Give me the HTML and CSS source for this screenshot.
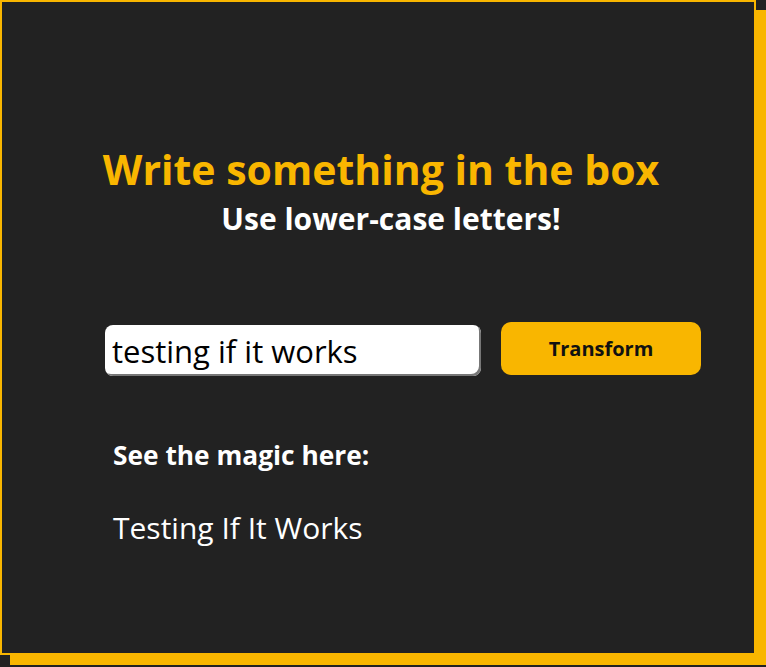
FILE: index.html
```html
<!DOCTYPE html>
<html>
<head>
<meta charset="utf-8">
<link rel="stylesheet" href="styles.css">
</head>
<body>
<div class="box">
  <h1 class="title">Write something in the box</h1>
  <h2 class="subtitle">Use lower-case letters!</h2>
  <div class="form">
    <input class="field" type="text" value="testing if it works">
    <button class="btn">Transform</button>
  </div>
  <div class="result">
    <h3 class="label">See the magic here:</h3>
    <p class="output">Testing If It Works</p>
  </div>
</div>
</body>
</html>
```
FILE: styles.css
```css
html, body {
  margin: 0;
  padding: 0;
  background: #222222;
}
body {
  font-family: "Open Sans", "DejaVu Sans", sans-serif;
  min-height: 667px;
}
.box {
  box-sizing: border-box;
  width: 756px;
  height: 655px;
  border: 2px solid #f9b600;
  box-shadow: 10px 10px 0 #f9b600;
  background: #222222;
  padding: 142px 0 0 0;
}
.title {
  margin: 0 0 0 6px;
  text-align: center;
  color: #f9b600;
  font-size: 41px;
  font-weight: 700;
  line-height: 50px;
}
.subtitle {
  margin: 7px 0 0 26px;
  text-align: center;
  color: #ffffff;
  font-size: 30px;
  font-weight: 700;
  line-height: 36px;
}
.form {
  display: flex;
  align-items: flex-start;
  gap: 20px;
  margin: 85px 0 0 103px;
}
.field {
  box-sizing: border-box;
  width: 376px;
  height: 51px;
  margin-top: 3px;
  border: none;
  border-radius: 8px;
  background: #ffffff;
  box-shadow: inset -2px -2px 0 #777777;
  padding: 0 7px;
  font-family: inherit;
  font-size: 31px;
  color: #000000;
  outline: none;
}
.btn {
  width: 200px;
  height: 53px;
  border: none;
  border-radius: 10px;
  background: #f9b600;
  color: #111111;
  font-family: inherit;
  font-size: 20px;
  font-weight: 700;
}
.result {
  margin: 62px 0 0 111px;
}
.label {
  margin: 0;
  color: #ffffff;
  font-size: 26.3px;
  font-weight: 700;
  line-height: 34px;
}
.output {
  margin: 36px 0 0;
  color: #ffffff;
  font-size: 30px;
  line-height: 40px;
}
```
